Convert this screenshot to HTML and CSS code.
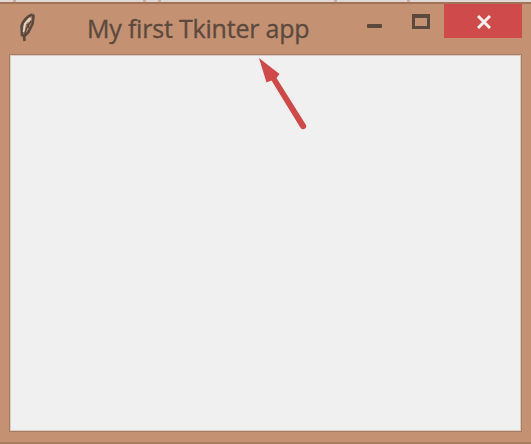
FILE: index.html
```html
<!DOCTYPE html>
<html lang="en">
<head>
<meta charset="utf-8">
<title>My first Tkinter app</title>
<link rel="stylesheet" href="styles.css">
</head>
<body>
<div class="backdrop"><i></i><i></i><i></i><i></i><i></i><i></i></div>
<main class="window">
  <header class="titlebar">
    <svg class="feather" width="18" height="30" viewBox="0 0 18 30" aria-hidden="true">
      <path d="M13 1.500C8 3 3.500 9 2.500 13L3 22L5 23L5.500 28M13 1.500L14.500 3L13.500 11L9.500 19L5.500 23" fill="#a98468" stroke="#5c493e" stroke-width="2.600" stroke-linejoin="round"/>
      <path d="M10.500 5.500L6 11L4.500 19M11.500 5L9.500 9" fill="none" stroke="#e8d5c8" stroke-width="1.800"/>
      <path d="M12 8L7.500 15L5.500 22M8 11L10 15" fill="none" stroke="#5c493e" stroke-width="1.500"/>
    </svg>
    <h1 class="title">My first Tkinter app</h1>
    <div class="controls">
      <span class="minimize"></span>
      <span class="maximize"></span>
      <span class="close">
        <svg width="14" height="14" viewBox="0 0 14 14"><path d="M1 1L13 13M13 1L1 13" stroke="#f3eeee" stroke-width="3" fill="none"/></svg>
      </span>
    </div>
  </header>
  <section class="client">
    <svg class="arrow" width="50" height="75" viewBox="0 0 50 75" aria-hidden="true">
      <path d="M1 1L21.500 17L18.500 21L48 68Q49 71 46 72Q43.500 73 42 70L13.500 23.500L8.500 25.500Z" fill="#d14849"/>
    </svg>
  </section>
</main>
</body>
</html>
```
FILE: styles.css
```css
* { box-sizing: border-box; }
body {
  margin: 0;
  width: 531px;
  height: 444px;
  display: flex;
  flex-direction: column;
  overflow: hidden;
  background: #a97b5f;
  font-family: "Open Sans", "Noto Sans", sans-serif;
}
.backdrop {
  height: 2px;
  flex: none;
  display: grid;
  grid-template-columns: 13px 127px 12px 173px 70px 1fr;
  gap: 3px;
  background: #c9b0a0;
}
.backdrop i { background: #e0d9d5; }
.window {
  height: 440px;
  display: flex;
  flex-direction: column;
  border-top: 2px solid #a17459;
  background: #c49272;
  padding: 0 9px 10px;
}
.titlebar {
  height: 50px;
  flex: none;
  display: flex;
}
.feather { margin: 9px 0 0 10px; }
.title {
  width: 240px;
  margin: 6px 0 0 50px;
  color: #5c493e;
  font-size: 25px;
  line-height: 36px;
  font-weight: 400;
  letter-spacing: -0.2px;
  white-space: nowrap;
  -webkit-text-stroke: 0.35px #5c493e;
}
.controls {
  display: flex;
  margin-left: auto;
}
.minimize {
  width: 15px;
  height: 4px;
  margin: 20px 30px 0 0;
  border-radius: 1px;
  background: #5c493e;
}
.maximize {
  width: 18px;
  height: 15px;
  margin: 10px 14px 0 0;
  border: 3px solid #5c493e;
  border-top-width: 4px;
}
.close {
  width: 78px;
  height: 34px;
  display: flex;
  justify-content: center;
  align-items: center;
  padding: 2px 0 0 2px;
  background: #cf4a4a;
}
.client {
  flex: 1;
  position: relative;
  border: 1px solid #a97b5f;
  background: #f0f0f0;
  box-shadow: inset 0 0 0 1px #d8cdc6;
}
.arrow {
  position: absolute;
  left: 248px;
  top: 2px;
}
```
